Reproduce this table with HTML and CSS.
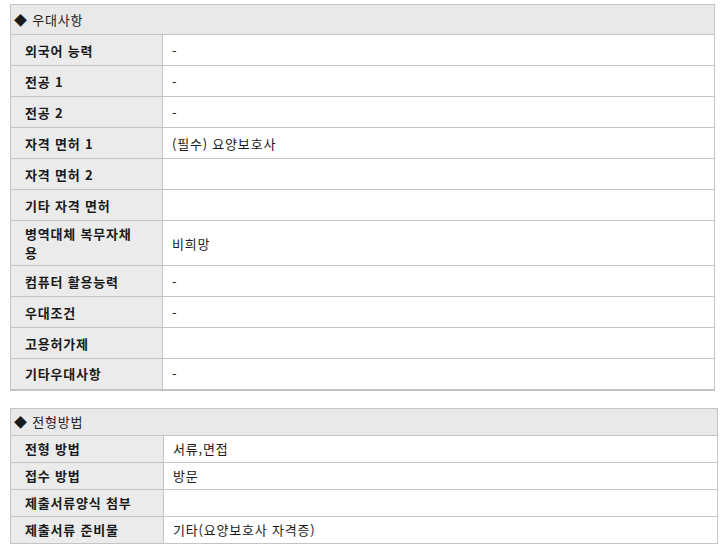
FILE: index.html
```html
<!DOCTYPE html>
<html lang="ko">
<head>
<meta charset="utf-8">
<link rel="stylesheet" href="styles.css">
</head>
<body>
<div class="page">
  <table class="info info-a">
    <colgroup><col class="c-label-a"><col></colgroup>
    <tr class="head"><th colspan="2">◆ 우대사항</th></tr>
    <tr><th>외국어 능력</th><td>-</td></tr>
    <tr><th>전공 1</th><td>-</td></tr>
    <tr><th>전공 2</th><td>-</td></tr>
    <tr><th>자격 면허 1</th><td>(필수) 요양보호사</td></tr>
    <tr><th>자격 면허 2</th><td></td></tr>
    <tr><th>기타 자격 면허</th><td></td></tr>
    <tr class="tall"><th>병역대체 복무자채용</th><td>비희망</td></tr>
    <tr><th>컴퓨터 활용능력</th><td>-</td></tr>
    <tr><th>우대조건</th><td>-</td></tr>
    <tr><th>고용허가제</th><td></td></tr>
    <tr><th>기타우대사항</th><td>-</td></tr>
  </table>

  <table class="info info-b">
    <colgroup><col class="c-label-b"><col></colgroup>
    <tr class="head"><th colspan="2">◆ 전형방법</th></tr>
    <tr><th>전형 방법</th><td>서류,면접</td></tr>
    <tr><th>접수 방법</th><td>방문</td></tr>
    <tr><th>제출서류양식 첨부</th><td></td></tr>
    <tr><th>제출서류 준비물</th><td>기타(요양보호사 자격증)</td></tr>
  </table>
</div>
</body>
</html>
```

FILE: styles.css
```css
html, body {
  margin: 0;
  padding: 0;
  background: #ffffff;
}

.page {
  padding: 4px 0 0 10px;
  font-family: "Noto Sans CJK KR", "Noto Sans", sans-serif;
  font-size: 13px;
  color: #1a1a1a;
  letter-spacing: 0.8px;
}

.info {
  border-collapse: collapse;
  table-layout: fixed;
}

.info th,
.info td {
  border: 1px solid #c4c4c4;
  padding: 0;
  text-align: left;
  vertical-align: middle;
  line-height: 17px;
}

.info th {
  background: #ebebeb;
  font-weight: bold;
  padding-left: 14px;
  padding-right: 24px;
  word-break: break-all;
}

.info td {
  background: #fff;
  padding-left: 9px;
}

.info .head th {
  padding-left: 3px;
  font-weight: normal;
  background: #e9e9e9;
}

.info-a {
  width: 705px;
  border-bottom: 2px solid #c4c4c4;
}

.info-a tr { height: 31px; }
.info-a .head { height: 30px; }
.info-a .tall { height: 45px; }
.info-a .tall th { line-height: 19px; }

.c-label-a { width: 152px; }

.info-b {
  width: 708px;
  margin-top: 17px;
}

.info-b tr { height: 27px; }
.info-b .head { height: 27px; }

.c-label-b { width: 153px; }
```
